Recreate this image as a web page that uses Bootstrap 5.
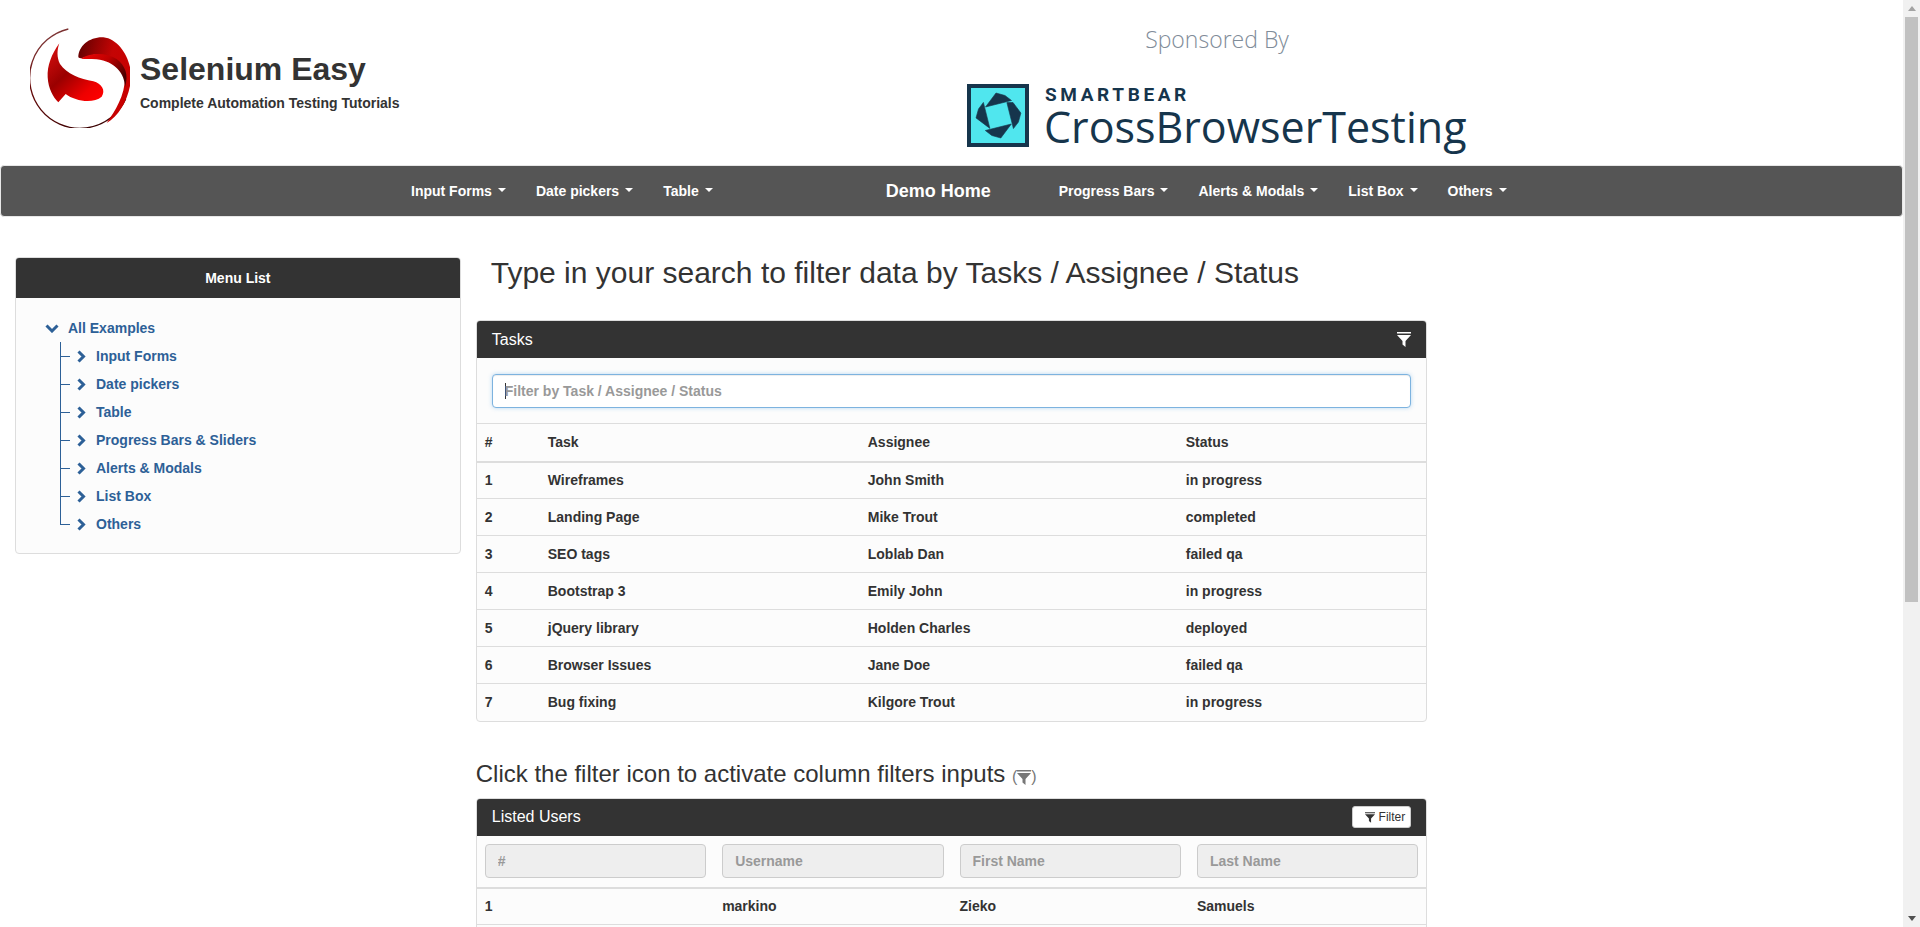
<!DOCTYPE html>
<html>
<head>
  <meta charset="UTF-8">
  <title>Selenium Easy - Table Filter</title>
  <link href="https://cdn.jsdelivr.net/npm/bootstrap@5.3.0/dist/css/bootstrap.min.css" rel="stylesheet">
  <style>
    html, body { height: 100%; }
    body { font-family: "Liberation Sans", Arial, sans-serif; font-size: 14px; color: #333; overflow: hidden; }

    .page-main { width: 1903px; height: 927px; overflow: hidden; }
    .fake-scroll { width: 17px; background: #f1f1f1; }
    .fake-scroll-btn { height: 17px; }
    .fake-scroll-thumb { width: 13px; height: 585px; background: #c1c1c1; }
    .fake-scroll-track { flex: 1; }

    /* header */
    .top-head { height: 165px; }
    .logo-side { width: 952px; padding: 28px 0 0 30px; }
    .logo-svg { width: 100px; height: 100px; }
    .logo-text { margin-left: 10px; padding-top: 23px; }
    .logo-title { font-size: 32px; font-weight: 700; line-height: 36px; color: #333; }
    .logo-sub { font-size: 14px; font-weight: 700; line-height: 16px; margin-top: 8px; color: #333; }
    .sponsor-side { width: 532px; }
    .sponsor-title { font-family: "Open Sans", sans-serif; font-weight: 300; font-size: 23px; line-height: 30px; color: #7f8c99; margin-top: 24px; margin-bottom: 30px; text-align: center; padding-right: 2px; }
    .sponsor-logo { margin: 0 0 0 15px; }
    .sb-square { width: 62px; height: 63px; }
    .sb-text { margin-left: 15px; color: #16354c; }
    .sb-top { font-family: Roboto, sans-serif; font-weight: 700; font-size: 19px; line-height: 18px; letter-spacing: 3.6px; margin-top: 2px; margin-left: 1px; }
    .sb-name { font-family: "Open Sans", sans-serif; font-size: 43px; line-height: 46px; }

    /* nav */
    .top-nav { width: 1903px; height: 52px; background: #555; border: 1px solid #e7e7e7; border-radius: 4px; padding: 0 0 0 395px; margin-bottom: 40px; --bs-navbar-nav-link-padding-x: 15px; }
    .top-nav .nav-link { color: #fff; font-weight: 700; font-size: 14px; padding-top: 0; padding-bottom: 0; line-height: 50px; }
    .top-nav .navbar-brand { color: #fff; font-weight: 700; font-size: 18px; padding: 0; margin: 0 53px 0 158px; line-height: 50px; }
    .top-nav .dropdown-toggle::after { margin-left: 6px; border-top-width: 4px; border-right-width: 4px; border-left-width: 4px; }

    /* panels */
    .side-col { padding: 0 15px; }
    .dark-panel { background: #fcfcfc; border: 1px solid #ddd; border-radius: 4px; overflow: hidden; }
    .dark-head { background: #333; color: #fff; border: 0; border-radius: 0; }
    .side-head { height: 40px; line-height: 40px; text-align: center; font-weight: 700; font-size: 14px; }
    .side-body { padding: 16px 30px 0 29px; height: 255px; }

    .tree-root { color: #2d6097; font-weight: 700; height: 28px; }
    .tree-root svg { margin-right: 9px; }
    .tree-list { list-style: none; padding: 0; margin: 0 0 0 15px; }
    .tree-list li { height: 28px; padding-left: 17px; color: #2d6097; font-weight: 700;
      background: linear-gradient(#2d6097, #2d6097) left top / 1px 100% no-repeat, linear-gradient(#2d6097, #2d6097) left 14px / 10px 1px no-repeat; }
    .tree-list li:last-child { background-size: 1px 15px, 10px 1px; }
    .tree-list svg { margin-right: 10px; }

    .main-title { font-size: 30px; font-weight: 400; line-height: 32px; margin: 0 0 31px 15px; color: #333; height: 32px; }
    .sub-title { font-size: 24px; font-weight: 400; line-height: 28px; margin: 0 0 7px 0; color: #333; }
    .sub-title span { font-size: 16px; color: #777; }
    .panel-head { height: 37px; padding: 0 15px; font-size: 16px; }
    .tasks-panel { margin-bottom: 38px; }

    .search-wrap { padding: 16px 15px 15px; height: 65px; }
    /* text cursor standing in the empty field, as photographed */
    .search-input { height: 34px; font-size: 14px; font-weight: 700; padding: 6px 12px; border: 1px solid #7db3df; border-radius: 4px; box-shadow: inset 0 1px 1px rgba(0,0,0,.075), 0 0 4px rgba(102,175,233,.45);
      background: #fff linear-gradient(#333, #333) 12px center / 1px 16px no-repeat; }
    .search-input::placeholder { color: #999; }

    .data-table { margin: 0; font-size: 14px; font-weight: 700; table-layout: fixed; --bs-table-bg: transparent; --bs-table-color: #333; }
    .data-table th, .data-table td { padding: 0 8px; height: 37px; vertical-align: middle; border-color: #ddd; border-bottom-width: 0; border-top: 1px solid #ddd; font-weight: 700; }
    .data-table thead th { border-bottom: 2px solid #ddd; height: 38px; }
    .data-table tbody tr:first-child td { border-top: 0; }

    .filter-row th { height: 52px !important; padding: 8px 8px; border-top: 0 !important; }
    .filter-input { height: 34px; font-size: 14px; font-weight: 700; padding: 6px 12px; border-radius: 4px; }
    .filter-input:disabled { background: #eee; border-color: #ccc; }
    .filter-input::placeholder { color: #999; }
    .filter-btn { width: 59px; height: 22px; padding: 0 5px 0 0; font-size: 12px; line-height: 20px; background: #fff; color: #333; border: 1px solid #ccc; border-radius: 3px; }
  </style>
</head>
<body class="d-flex">
  <div class="page-main">

    <!-- Header -->
    <header class="top-head d-flex">
      <div class="logo-side d-flex align-items-start">
        <svg class="logo-svg" viewBox="15 12 300 300">
          <defs>
            <linearGradient id="s-top" x1="0" y1="0" x2="1" y2=".45">
              <stop offset="0" stop-color="#5c0000"/><stop offset=".6" stop-color="#c40404"/><stop offset="1" stop-color="#c80000"/>
            </linearGradient>
            <linearGradient id="s-crest" x1="0" y1="0" x2="1" y2=".6">
              <stop offset="0" stop-color="#ee0606"/><stop offset=".5" stop-color="#c00000"/><stop offset="1" stop-color="#4a0000"/>
            </linearGradient>
            <linearGradient id="s-low" x1="0" y1="0" x2=".9" y2="1">
              <stop offset="0" stop-color="#e01010"/><stop offset=".45" stop-color="#9a0000"/><stop offset=".8" stop-color="#ee0000"/><stop offset="1" stop-color="#ff0000"/>
            </linearGradient>
            <linearGradient id="s-ring" x1="0" y1="0" x2=".6" y2="1">
              <stop offset="0" stop-color="#8a5050"/><stop offset=".4" stop-color="#6a0a0a"/><stop offset="1" stop-color="#3a0000"/>
            </linearGradient>
          </defs>
          <path d="M130 15 A151 151 0 1 0 302 225" fill="none" stroke="url(#s-ring)" stroke-width="4"/>
          <path d="M160 100 C160 65 195 38 235 40 C285 45 320 110 318 160 C316 215 285 275 245 297 C270 262 300 215 300 160 C300 135 270 100 220 92 C195 90 170 110 160 100 Z" fill="url(#s-top)"/>
          <path d="M168 104 C190 88 240 82 275 105 C300 125 312 150 300 190 C300 150 270 112 215 106 C195 104 180 106 168 104 Z" fill="url(#s-crest)"/>
          <path d="M103 58 C80 90 66 125 68 160 C70 195 85 220 100 235 L122 210 C150 232 205 240 230 218 C243 200 230 178 205 172 C165 165 125 150 105 120 C95 100 96 78 103 58 Z" fill="url(#s-low)"/>
        </svg>
        <div class="logo-text">
          <div class="logo-title">Selenium Easy</div>
          <div class="logo-sub">Complete Automation Testing Tutorials</div>
        </div>
      </div>
      <div class="sponsor-side">
        <div class="sponsor-title">Sponsored By</div>
        <div class="sponsor-logo d-flex">
          <svg class="sb-square" viewBox="0 0 62 63">
            <rect x="2" y="2" width="58" height="59" fill="#50e6ee" stroke="#16354c" stroke-width="4"/>
            <g fill="#16354c" stroke="#16354c" stroke-width=".6" stroke-linejoin="round">
              <path d="M18.5 23 L29 9 L38 11.5 L44.5 16.5 Z"/>
              <path d="M39.9 18.6 L46 18.5 L53.9 29.1 L51.4 38.1 L46.4 44.6 Z"/>
              <path d="M44.3 40 L33.8 54 L24.8 51.5 L18.3 46.5 Z"/>
              <path d="M22.9 44.4 L9 33.9 L11.5 25 L16.4 18.4 Z"/>
            </g>
          </svg>
          <div class="sb-text">
            <div class="sb-top">SMARTBEAR</div>
            <div class="sb-name">CrossBrowserTesting</div>
          </div>
        </div>
      </div>
    </header>

    <!-- Top nav -->
    <nav class="navbar navbar-expand top-nav">
      <ul class="navbar-nav">
        <li class="nav-item"><a class="nav-link dropdown-toggle" href="#">Input Forms</a></li>
        <li class="nav-item"><a class="nav-link dropdown-toggle" href="#">Date pickers</a></li>
        <li class="nav-item"><a class="nav-link dropdown-toggle" href="#">Table</a></li>
      </ul>
      <a class="navbar-brand" href="#">Demo Home</a>
      <ul class="navbar-nav">
        <li class="nav-item"><a class="nav-link dropdown-toggle" href="#">Progress Bars</a></li>
        <li class="nav-item"><a class="nav-link dropdown-toggle" href="#">Alerts &amp; Modals</a></li>
        <li class="nav-item"><a class="nav-link dropdown-toggle" href="#">List Box</a></li>
        <li class="nav-item"><a class="nav-link dropdown-toggle" href="#">Others</a></li>
      </ul>
    </nav>

    <div class="row g-0">
      <!-- Sidebar -->
      <div class="col-3 side-col">
        <div class="dark-panel">
          <div class="dark-head side-head">Menu List</div>
          <div class="side-body">
            <div class="tree-root d-flex align-items-center">
              <svg width="14" height="9" viewBox="0 0 14 9"><path d="M1.5 1.5 L7 7 L12.5 1.5" fill="none" stroke="#2d6097" stroke-width="3"/></svg>
              All Examples
            </div>
            <ul class="tree-list">
              <li class="d-flex align-items-center"><svg width="9" height="13" viewBox="0 0 9 13"><path d="M1.5 1.5 L6.5 6.5 L1.5 11.5" fill="none" stroke="#2d6097" stroke-width="3"/></svg>Input Forms</li>
              <li class="d-flex align-items-center"><svg width="9" height="13" viewBox="0 0 9 13"><path d="M1.5 1.5 L6.5 6.5 L1.5 11.5" fill="none" stroke="#2d6097" stroke-width="3"/></svg>Date pickers</li>
              <li class="d-flex align-items-center"><svg width="9" height="13" viewBox="0 0 9 13"><path d="M1.5 1.5 L6.5 6.5 L1.5 11.5" fill="none" stroke="#2d6097" stroke-width="3"/></svg>Table</li>
              <li class="d-flex align-items-center"><svg width="9" height="13" viewBox="0 0 9 13"><path d="M1.5 1.5 L6.5 6.5 L1.5 11.5" fill="none" stroke="#2d6097" stroke-width="3"/></svg>Progress Bars &amp; Sliders</li>
              <li class="d-flex align-items-center"><svg width="9" height="13" viewBox="0 0 9 13"><path d="M1.5 1.5 L6.5 6.5 L1.5 11.5" fill="none" stroke="#2d6097" stroke-width="3"/></svg>Alerts &amp; Modals</li>
              <li class="d-flex align-items-center"><svg width="9" height="13" viewBox="0 0 9 13"><path d="M1.5 1.5 L6.5 6.5 L1.5 11.5" fill="none" stroke="#2d6097" stroke-width="3"/></svg>List Box</li>
              <li class="d-flex align-items-center"><svg width="9" height="13" viewBox="0 0 9 13"><path d="M1.5 1.5 L6.5 6.5 L1.5 11.5" fill="none" stroke="#2d6097" stroke-width="3"/></svg>Others</li>
            </ul>
          </div>
        </div>
      </div>

      <!-- Main column -->
      <div class="col-6">
        <h2 class="main-title">Type in your search to filter data by Tasks / Assignee / Status</h2>

        <div class="dark-panel tasks-panel">
          <div class="dark-head panel-head d-flex align-items-center justify-content-between">
            <span>Tasks</span>
            <svg width="14" height="15" viewBox="0 0 14 15"><path d="M0 0 H14 V1.5 H0 Z M0 3 H14 L8.5 9 V15 L5.5 12.5 V9 Z" fill="#fff"/></svg>
          </div>
          <div class="search-wrap">
            <input type="text" class="form-control search-input" placeholder="Filter by Task / Assignee / Status">
          </div>
          <table class="table data-table">
            <colgroup><col style="width:63px"><col style="width:320px"><col style="width:318px"><col></colgroup>
            <thead>
              <tr><th>#</th><th>Task</th><th>Assignee</th><th>Status</th></tr>
            </thead>
            <tbody id="task-rows"></tbody>
          </table>
        </div>

        <h3 class="sub-title">Click the filter icon to activate column filters inputs <span>(<svg width="14" height="15" viewBox="0 0 14 15"><path d="M0 0 H14 V1.5 H0 Z M0 3 H14 L8.5 9 V15 L5.5 12.5 V9 Z" fill="#777"/></svg>)</span></h3>

        <div class="dark-panel">
          <div class="dark-head panel-head d-flex align-items-center justify-content-between">
            <span>Listed Users</span>
            <button type="button" class="btn filter-btn d-flex align-items-center justify-content-end gap-1">
              <svg width="10" height="11" viewBox="0 0 14 15"><path d="M0 0 H14 V1.5 H0 Z M0 3 H14 L8.5 9 V15 L5.5 12.5 V9 Z" fill="#333"/></svg>Filter
            </button>
          </div>
          <table class="table data-table">
            <thead>
              <tr class="filter-row">
                <th><input class="form-control filter-input" placeholder="#" disabled></th>
                <th><input class="form-control filter-input" placeholder="Username" disabled></th>
                <th><input class="form-control filter-input" placeholder="First Name" disabled></th>
                <th><input class="form-control filter-input" placeholder="Last Name" disabled></th>
              </tr>
            </thead>
            <tbody>
              <tr><td>1</td><td>markino</td><td>Zieko</td><td>Samuels</td></tr>
              <tr><td>&nbsp;</td><td></td><td></td><td></td></tr>
            </tbody>
          </table>
        </div>
      </div>
    </div>
  </div>

  <!-- Scrollbar as in the screenshot -->
  <aside class="fake-scroll d-flex flex-column align-items-center">
    <div class="fake-scroll-btn d-flex align-items-center justify-content-center">
      <svg width="8" height="5" viewBox="0 0 8 5"><path d="M4 0 L8 5 H0 Z" fill="#a3a3a3"/></svg>
    </div>
    <div class="fake-scroll-thumb"></div>
    <div class="fake-scroll-track"></div>
    <div class="fake-scroll-btn d-flex align-items-center justify-content-center">
      <svg width="8" height="5" viewBox="0 0 8 5"><path d="M4 5 L8 0 H0 Z" fill="#505050"/></svg>
    </div>
  </aside>

  <script src="https://cdn.jsdelivr.net/npm/bootstrap@5.3.0/dist/js/bootstrap.bundle.min.js"></script>
  <script>
    // Task rows
    const tasks = [
      ['Wireframes', 'John Smith', 'in progress'],
      ['Landing Page', 'Mike Trout', 'completed'],
      ['SEO tags', 'Loblab Dan', 'failed qa'],
      ['Bootstrap 3', 'Emily John', 'in progress'],
      ['jQuery library', 'Holden Charles', 'deployed'],
      ['Browser Issues', 'Jane Doe', 'failed qa'],
      ['Bug fixing', 'Kilgore Trout', 'in progress']
    ];
    const tbody = document.getElementById('task-rows');
    tasks.forEach((t, i) => {
      tbody.innerHTML += `<tr><td>${i + 1}</td><td>${t[0]}</td><td>${t[1]}</td><td>${t[2]}</td></tr>`;
    });
  </script>
</body>
</html>
